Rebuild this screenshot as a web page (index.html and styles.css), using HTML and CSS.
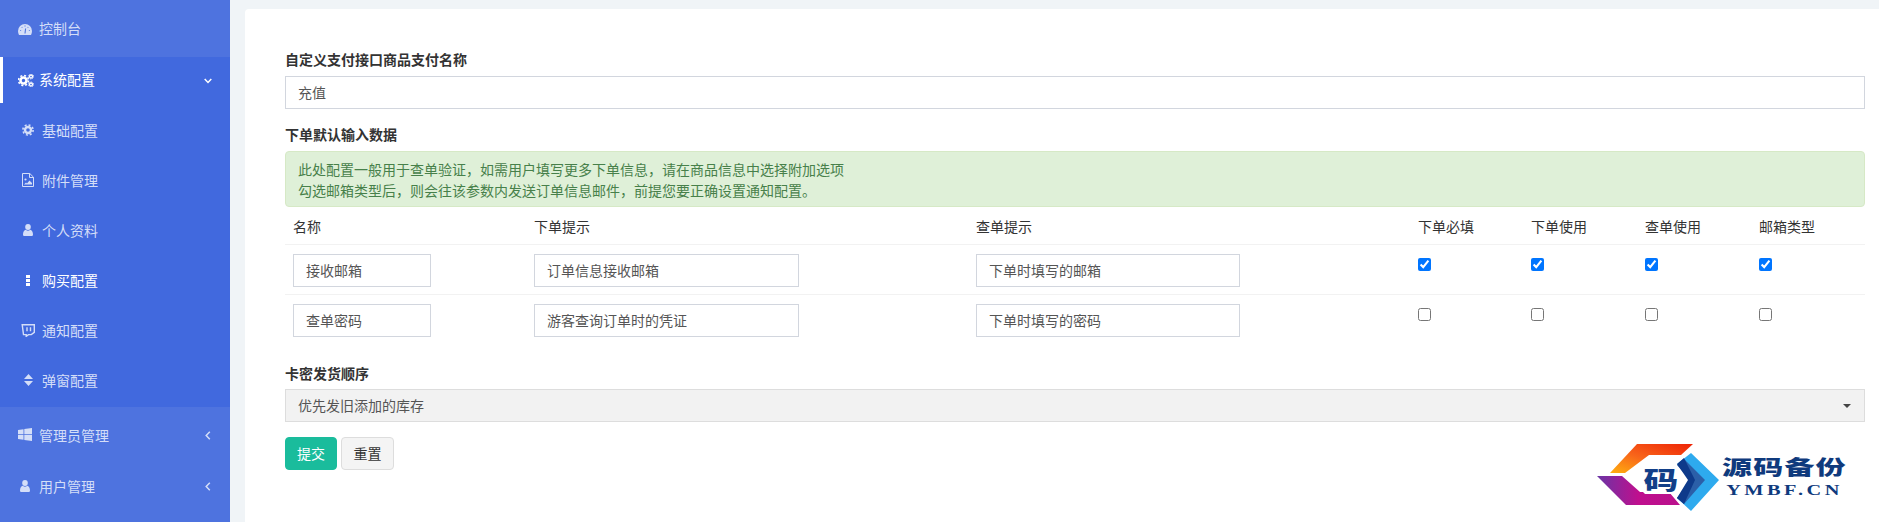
FILE: index.html
```html
<!DOCTYPE html>
<html lang="zh-CN">
<head>
<meta charset="utf-8">
<title>购买配置</title>
<link rel="stylesheet" href="styles.css">
</head>
<body>
<aside class="sidebar">
  <a class="nav-item nav-top">
    <svg class="ico ico-gauge" viewBox="0 0 14 12"><path fill="currentColor" d="M0 8a7 7 0 0 1 14 0c0 1.400-.4 2.800-1 4H1C.4 10.800 0 9.400 0 8z"/><path class="cut" d="M7 10.500 7.600 5.500M2.300 7.500h.8M10.900 7.500h.8M3.800 4.200l.5.500M10.200 4.200l-.5.500M7 2.600v.8"/></svg>
    <span>控制台</span>
  </a>
  <a class="nav-item nav-open">
    <svg class="ico ico-cogs" viewBox="0 0 16 13"><g fill="none" stroke="currentColor"><circle cx="5.500" cy="6.500" r="3" stroke-width="2.600"/><circle cx="5.500" cy="6.500" r="5" stroke-width="1.600" stroke-dasharray="2 1.930"/><circle cx="13" cy="2.500" r="1.500" stroke-width="1.300"/><circle cx="13" cy="2.500" r="2.500" stroke-width=".9" stroke-dasharray="1.100 .86"/><circle cx="13" cy="10.500" r="1.500" stroke-width="1.300"/><circle cx="13" cy="10.500" r="2.500" stroke-width=".9" stroke-dasharray="1.100 .86"/></g></svg>
    <span>系统配置</span>
    <svg class="arrow arrow-down" viewBox="0 0 8 6"><path d="M.7 1 4 4.500 7.300 1"/></svg>
  </a>
  <div class="submenu">
    <a class="nav-item nav-sub">
      <svg class="ico ico-cog" viewBox="0 0 12 12"><g fill="none" stroke="currentColor"><circle cx="6" cy="6" r="3" stroke-width="2.400"/><circle cx="6" cy="6" r="5.100" stroke-width="1.600" stroke-dasharray="2 2"/></g></svg>
      <span>基础配置</span>
    </a>
    <a class="nav-item nav-sub">
      <svg class="ico ico-file" viewBox="0 0 12 14"><path fill="none" stroke="currentColor" d="M.5.500h7.300l3.700 3.700v9.300H.5zM7.500.500v4h4"/><circle fill="currentColor" cx="3.500" cy="6.500" r="1.100"/><path fill="currentColor" d="M2 11.500 4 9.500l1 1 2.500-3 2.500 2.500v1.500z"/></svg>
      <span>附件管理</span>
    </a>
    <a class="nav-item nav-sub">
      <svg class="ico ico-user" viewBox="0 0 10 12"><ellipse fill="currentColor" cx="5" cy="3" rx="2.800" ry="3"/><path fill="currentColor" d="M0 10.500C0 8 1.200 6 2.800 5.800 3.500 6.400 4.200 6.700 5 6.700s1.500-.3 2.200-.9C8.800 6 10 8 10 10.500c0 1-.7 1.500-1.500 1.500h-7C.7 12 0 11.500 0 10.500z"/></svg>
      <span>个人资料</span>
    </a>
    <a class="nav-item nav-sub is-current">
      <svg class="ico ico-dots" viewBox="0 0 4 11"><path fill="currentColor" d="M0 0h4v3H0zM0 4h4v3H0zM0 8h4v3H0z"/></svg>
      <span>购买配置</span>
    </a>
    <a class="nav-item nav-sub">
      <svg class="ico ico-twitch" viewBox="0 0 14 13"><path fill="none" stroke="currentColor" stroke-width="1.400" d="M1.200.700h12.100v7.600l-3 2.300H7.500l-2.300 1.700v-1.700H2.500z"/><path fill="none" stroke="currentColor" stroke-width="1.400" d="M6 3.200v4M9.500 3.200v4"/></svg>
      <span>通知配置</span>
    </a>
    <a class="nav-item nav-sub">
      <svg class="ico ico-sort" viewBox="0 0 9 12"><path fill="currentColor" d="M4.500 0 9 5H0zM4.500 12 0 7h9z"/></svg>
      <span>弹窗配置</span>
    </a>
  </div>
  <div class="nav-rest">
    <a class="nav-item nav-group">
      <svg class="ico ico-win" viewBox="0 0 14 13"><path fill="currentColor" d="M0 2 5.500 1.200V6H0zM6.300 1 14 0v6H6.300zM0 6.800h5.500v4.900L0 11zM6.300 6.800H14V13l-7.700-1.100z"/></svg>
      <span>管理员管理</span>
      <svg class="arrow arrow-left" viewBox="0 0 6 9"><path d="M4.800.8 1.200 4.500l3.600 3.700"/></svg>
    </a>
    <a class="nav-item nav-group">
      <svg class="ico ico-user2" viewBox="0 0 10 12"><ellipse fill="currentColor" cx="5" cy="3" rx="2.800" ry="3"/><path fill="currentColor" d="M0 10.500C0 8 1.200 6 2.800 5.800 3.500 6.400 4.200 6.700 5 6.700s1.500-.3 2.200-.9C8.800 6 10 8 10 10.500c0 1-.7 1.500-1.500 1.500h-7C.7 12 0 11.500 0 10.500z"/></svg>
      <span>用户管理</span>
      <svg class="arrow arrow-left" viewBox="0 0 6 9"><path d="M4.800.8 1.200 4.500l3.600 3.700"/></svg>
    </a>
  </div>
</aside>

<main class="main">
  <section class="card">
    <form class="form">
      <label class="label label-first">自定义支付接口商品支付名称</label>
      <input class="field field-main" type="text" value="充值">

      <label class="label label-second">下单默认输入数据</label>
      <div class="alert">
        <div>此处配置一般用于查单验证，如需用户填写更多下单信息，请在商品信息中选择附加选项</div>
        <div>勾选邮箱类型后，则会往该参数内发送订单信息邮件，前提您要正确设置通知配置。</div>
      </div>

      <table class="grid">
        <colgroup>
          <col class="c-name"><col class="c-order"><col class="c-query">
          <col class="c-check"><col class="c-check2"><col class="c-check2"><col class="c-check2">
        </colgroup>
        <thead>
          <tr>
            <th>名称</th><th>下单提示</th><th>查单提示</th>
            <th>下单必填</th><th>下单使用</th><th>查单使用</th><th>邮箱类型</th>
          </tr>
        </thead>
        <tbody>
          <tr>
            <td><input class="field f-name" type="text" value="接收邮箱"></td>
            <td><input class="field f-order" type="text" value="订单信息接收邮箱"></td>
            <td><input class="field f-query" type="text" value="下单时填写的邮箱"></td>
            <td><input class="check" type="checkbox" checked></td>
            <td><input class="check" type="checkbox" checked></td>
            <td><input class="check" type="checkbox" checked></td>
            <td><input class="check" type="checkbox" checked></td>
          </tr>
          <tr>
            <td><input class="field f-name" type="text" value="查单密码"></td>
            <td><input class="field f-order" type="text" value="游客查询订单时的凭证"></td>
            <td><input class="field f-query" type="text" value="下单时填写的密码"></td>
            <td><input class="check" type="checkbox"></td>
            <td><input class="check" type="checkbox"></td>
            <td><input class="check" type="checkbox"></td>
            <td><input class="check" type="checkbox"></td>
          </tr>
        </tbody>
      </table>

      <label class="label label-third">卡密发货顺序</label>
      <div class="select">
        <span>优先发旧添加的库存</span>
        <i class="caret"></i>
      </div>

      <div class="actions">
        <button class="btn btn-primary" type="button">提交</button>
        <button class="btn btn-default" type="button">重置</button>
      </div>
    </form>
  </section>
</main>

<div class="watermark">
  <div class="wm-mark">
    <svg class="wm-svg" viewBox="0 0 125 70">
      <defs>
        <linearGradient id="wmTop" x1="0" y1="1" x2="1" y2="0">
          <stop offset="0" stop-color="#ffb00f"/><stop offset=".45" stop-color="#f8651a"/><stop offset="1" stop-color="#ee2306"/>
        </linearGradient>
        <linearGradient id="wmBottom" x1="0" y1="0" x2="1" y2="0">
          <stop offset="0" stop-color="#6a35a5"/><stop offset=".5" stop-color="#bf0f8e"/><stop offset="1" stop-color="#b9118c"/>
        </linearGradient>
      </defs>
      <path fill="url(#wmTop)" d="M40 0H96L84 11H52L28 29H13z"/>
      <path fill="url(#wmBottom)" d="M0 32H25L43 48H72L83 61H29z"/>
      <path fill="#2eaaee" d="M94 9 122 36 94 67 80 54 97 36 80 20z"/>
      <path fill="#2b5fa8" d="M87 15 108 36 87 60 80 54 93 36 80 21z"/>
      <path fill="#0e3a8a" d="M80 20 87 14 98 36 87 60 80 54 91 36z"/>
      <path fill="#fff" d="M45 23H80L84 46 76 50H48L44 46z"/>
    </svg>
    <span class="wm-char">码</span>
  </div>
  <div class="wm-text">
    <div class="wm-cn">源码备份</div>
    <div class="wm-en">YMBF.CN</div>
  </div>
</div>
</body>
</html>
```

FILE: styles.css
```css
* { box-sizing: border-box; }
html, body { height: 100%; margin: 0; overflow: hidden; }
body {
  display: flex;
  background: #f0f4f7;
  color: #333;
  font-family: "Noto Sans CJK SC", "Noto Sans", sans-serif;
  font-size: 14px;
}

/* sidebar */
.sidebar {
  flex: 0 0 230px;
  height: 522px;
  background: #4e73df;
  display: flex;
  flex-direction: column;
}
.nav-item {
  display: flex;
  align-items: center;
  color: #d4def8;
  font-size: 14px;
  line-height: 20px;
  position: relative;
}
.nav-top { height: 57px; padding-left: 18px; }
.nav-top span { margin: -2px 0 0 7px; }
.nav-open {
  height: 46px;
  background: #4169de;
  color: #fff;
  border-left: 3px solid #fff;
  padding-left: 15px;
}
.nav-open span { margin: -2px 0 0 5px; }
.submenu { background: #4169de; padding: 2px 0; }
.nav-sub { height: 50px; }
.nav-sub span { position: absolute; left: 42px; margin-top: -1px; }
.is-current { color: #fff; }
.nav-rest { padding-top: 2px; }
.nav-group { height: 51px; padding-left: 18px; }
.nav-group span { position: absolute; left: 39px; }

.ico { display: block; flex: none; }
.cut { fill: none; stroke: #4e73df; stroke-width: 1.1; }
.ico-gauge { width: 14px; height: 12px; }
.ico-cogs { width: 16px; height: 13px; }
.ico-cog { width: 12px; height: 12px; margin-left: 22px; }
.ico-file { width: 12px; height: 14px; margin-left: 22px; }
.ico-user { width: 10px; height: 12px; margin-left: 23px; }
.ico-dots { width: 4px; height: 11px; margin-left: 26px; }
.ico-twitch { width: 14px; height: 13px; margin-left: 21px; }
.ico-sort { width: 9px; height: 12px; margin-left: 24px; }
.ico-win { width: 14px; height: 13px; }
.ico-user2 { width: 10px; height: 12px; margin-left: 2px; }

.arrow { position: absolute; fill: none; stroke: currentColor; stroke-width: 1.5; }
.arrow-down { width: 8px; height: 6px; left: 201px; top: 21px; }
.arrow-left { width: 6px; height: 9px; left: 205px; top: 22px; }

/* main */
.main {
  flex: 1;
  min-width: 0;
  padding: 9px 0 0 15px;
}
.card {
  background: #fff;
  height: 513px;
  border-top-left-radius: 4px;
  padding: 0 14px 0 40px;
}
.form { display: flex; flex-direction: column; }
.label {
  display: block;
  font-weight: 700;
  font-size: 14px;
  line-height: 18px;
  color: #333;
}
.label-first { margin-top: 41px; margin-bottom: 8px; }
.label-second { margin-top: 16px; margin-bottom: 8px; }
.label-third { margin-top: 20px; margin-bottom: 7px; }

.field {
  display: block;
  width: 100%;
  height: 33px;
  padding: 0 12px;
  border: 1px solid #d2d6de;
  border-radius: 0;
  background: #fff;
  color: #555;
  font: inherit;
  font-size: 14px;
  outline: none;
}
.field-main { padding-bottom: 2px; }
.f-name { width: 138px; }
.f-order { width: 265px; }
.f-query { width: 264px; }

.alert {
  height: 56px;
  padding: 7px 12px 0;
  background: #dff0d8;
  border: 1px solid #d6e9c6;
  border-radius: 4px;
  color: #47804a;
  font-size: 14px;
  line-height: 21px;
}

.grid {
  width: 100%;
  table-layout: fixed;
  border-collapse: collapse;
}
.c-name { width: 241px; }
.c-order { width: 442px; }
.c-query { width: 442px; }
.c-check { width: 113px; }
.c-check2 { width: 114px; }
.grid th {
  height: 37px;
  padding: 2px 8px 0;
  font-weight: 400;
  font-size: 14px;
  text-align: left;
  color: #333;
  border-bottom: 1px solid #f2f2f2;
}
.grid td {
  height: 50px;
  padding: 9px 8px 7px;
  vertical-align: top;
}
.grid tbody tr:first-child td { border-bottom: 1px solid #f2f2f2; }
.check {
  display: block;
  width: 13px;
  height: 13px;
  margin: 4px 0 0;
  accent-color: #0075ff;
}

.select {
  display: flex;
  align-items: center;
  justify-content: space-between;
  height: 33px;
  padding: 0 13px 2px 12px;
  background: #f2f2f2;
  border: 1px solid #ddd;
  color: #555;
  font-size: 14px;
}
.caret {
  width: 0;
  height: 0;
  margin-top: 2px;
  border-top: 4px solid #444;
  border-left: 4px solid transparent;
  border-right: 4px solid transparent;
}

.actions { display: flex; gap: 4px; margin-top: 15px; }
.btn {
  width: 52px;
  height: 33px;
  padding: 0 0 2px;
  border-radius: 4px;
  font: inherit;
  font-size: 14px;
}
.btn-primary { background: #1abc9c; border: 1px solid #1abc9c; color: #fff; }
.btn-default { width: 53px; background: #f4f4f4; border: 1px solid #ddd; color: #333; }

/* watermark laid over the page corner */
.watermark {
  position: absolute;
  left: 1597px;
  top: 444px;
  display: flex;
}
.wm-mark { position: relative; width: 125px; height: 70px; }
.wm-svg { display: block; width: 125px; height: 70px; }
.wm-char {
  position: absolute;
  left: 44px;
  top: 21px;
  width: 40px;
  text-align: center;
  color: #123f88;
  font-size: 24px;
  line-height: 28px;
  font-weight: 900;
  transform: scaleX(1.45);
}
.wm-text { color: #0f3a7d; text-align: center; }
.wm-cn {
  margin-top: 10px;
  width: 125px;
  font-weight: 900;
  font-size: 20px;
  line-height: 26px;
  letter-spacing: .8px;
  white-space: nowrap;
  transform: scaleX(1.5);
  transform-origin: left center;
  text-align: left;
}
.wm-en {
  margin-top: 4px;
  font-family: "Liberation Serif", serif;
  font-weight: 700;
  font-size: 14px;
  line-height: 14px;
  letter-spacing: 2.400px;
  transform: scaleX(1.45);
}
```
